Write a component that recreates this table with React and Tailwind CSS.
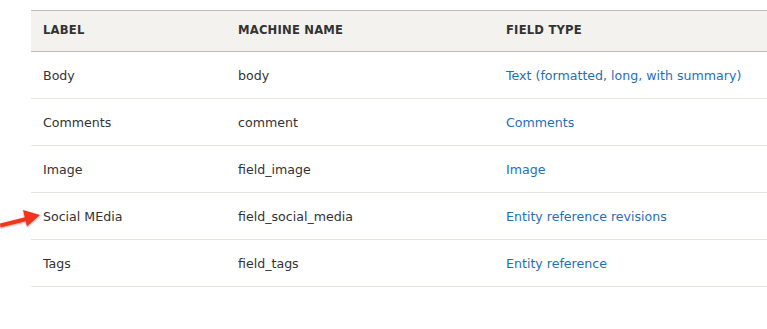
const rows = [
  { label: 'Body', machine: 'body', type: 'Text (formatted, long, with summary)' },
  { label: 'Comments', machine: 'comment', type: 'Comments' },
  { label: 'Image', machine: 'field_image', type: 'Image' },
  { label: 'Social MEdia', machine: 'field_social_media', type: 'Entity reference revisions', arrow: true },
  { label: 'Tags', machine: 'field_tags', type: 'Entity reference' },
]

function Arrow() {
  return (
    <svg
      className="absolute left-[-31px] top-[14px]"
      width="44"
      height="22"
      viewBox="0 0 44 22"
    >
      <defs>
        <filter id="shadow" x="-20%" y="-40%" width="140%" height="180%">
          <feDropShadow dx="0" dy="1" stdDeviation="0.8" floodColor="#000" floodOpacity="0.35" />
        </filter>
      </defs>
      <g filter="url(#shadow)" fill="#f0361a">
        <polygon points="0,16.5 26,10 27,14 0.5,20.5" />
        <polygon points="40,8 23,3 27,19.5" />
      </g>
    </svg>
  )
}

export default function App() {
  return (
    <div className="min-h-screen bg-white pt-[10px] pl-[31px] font-['DejaVu_Sans',sans-serif] text-[12.6px] text-[#333]">
      <table className="w-full border-collapse">
        <thead>
          <tr className="border-y border-[#bfbfba] bg-[#f3f2ef]">
            <th className="h-[41px] w-[195px] px-3 text-left text-[11.6px] font-bold uppercase tracking-[0.2px] text-[#333]">
              Label
            </th>
            <th className="w-[268px] px-3 text-left text-[11.6px] font-bold uppercase tracking-[0.2px] text-[#333]">
              Machine name
            </th>
            <th className="px-3 text-left text-[11.6px] font-bold uppercase tracking-[0.2px] text-[#333]">
              Field type
            </th>
          </tr>
        </thead>
        <tbody>
          {rows.map((row) => (
            <tr key={row.machine} className="border-b border-[#e6e4df]">
              <td className="relative h-[47px] px-3 pt-[2px]">
                {row.arrow ? <Arrow /> : null}
                {row.label}
              </td>
              <td className="px-3 pt-[2px]">{row.machine}</td>
              <td className="px-3 pt-[2px]">
                <a href="#" className="text-[#1f6fb8]">
                  {row.type}
                </a>
              </td>
            </tr>
          ))}
        </tbody>
      </table>
    </div>
  )
}
